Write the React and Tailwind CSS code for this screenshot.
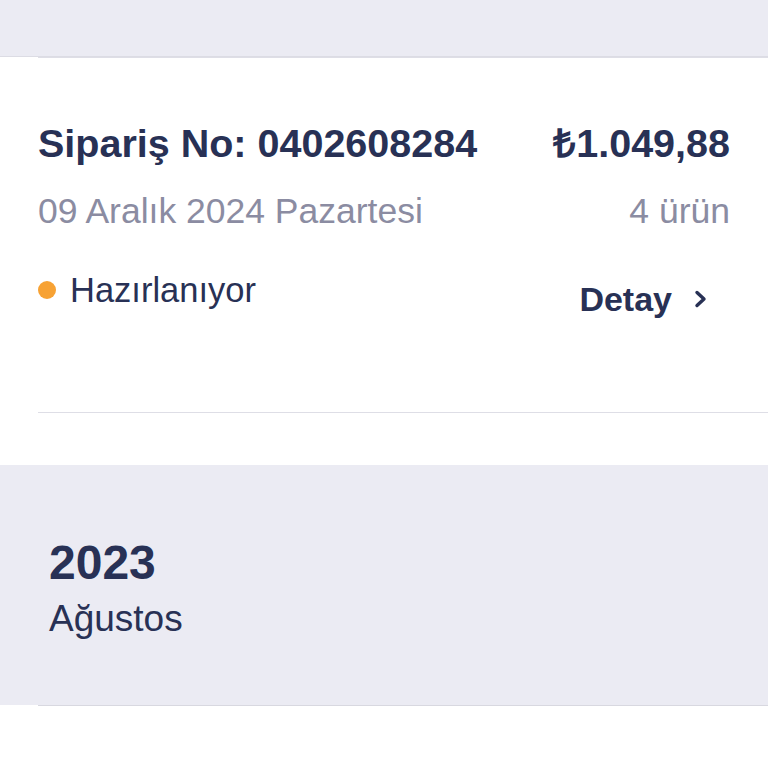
import React from "react";

const navy = "text-[#283155]";

const OrderCard = ({ orderNo, price, date, count, status }) => (
  <div className="pl-[38px]">
    <div className="border-t border-[#dedee6] pr-[38px] pt-[61px] pb-[93px]">
      {/* başlık + tutar */}
      <div className="flex items-center justify-between leading-[48px]">
        <span className={`text-[39.5px] font-bold ${navy}`}>Sipariş No: {orderNo}</span>
        <span className={`text-[39.5px] font-bold ${navy}`}>{price}</span>
      </div>

      {/* tarih + ürün sayısı */}
      <div className="mt-[24px] flex items-center justify-between leading-[40px] text-[35.5px] text-[#8b8ca2]">
        <span>{date}</span>
        <span>{count}</span>
      </div>

      {/* durum + detay */}
      <div className="mt-[39px] flex items-start justify-between">
        <div className="flex items-center gap-[14px] leading-[40px]">
          <span className="w-[18px] h-[18px] rounded-full bg-[#f7a234]"></span>
          <span className={`text-[34.5px] ${navy}`}>{status}</span>
        </div>
        <div className="mt-[9px] mr-[22px] flex items-center gap-[22px] leading-[40px]">
          <span className={`text-[34px] font-bold ${navy}`}>Detay</span>
          <svg width="14" height="18" viewBox="0 0 14 18" fill="none">
            <path d="M3 2.5L10 9L3 15.5" stroke="#283155" strokeWidth="3.4" strokeLinecap="round" strokeLinejoin="round" />
          </svg>
        </div>
      </div>
    </div>
  </div>
);

export default function App() {
  return (
    <div
      className="min-h-screen bg-white"
      style={{ fontFamily: '"Liberation Sans", Arial, sans-serif' }}
    >
      <div className="h-[57px] bg-[#ebebf3] border-b border-[#dcdce4]"></div>

      <OrderCard
        orderNo="0402608284"
        price="₺1.049,88"
        date="09 Aralık 2024 Pazartesi"
        count="4 ürün"
        status="Hazırlanıyor"
      />

      <div className="pl-[38px]">
        <div className="border-t border-[#dedee6] h-[53px]"></div>
      </div>

      {/* yıl / ay başlığı */}
      <div className="bg-[#ebebf3] h-[240px] pl-[49px] pt-[70px]">
        <div className={`text-[48px] font-bold leading-[56px] ${navy}`}>2023</div>
        <div className={`mt-[6px] text-[37px] leading-[44px] ${navy}`}>Ağustos</div>
      </div>

      <div className="pl-[38px]">
        <div className="border-t border-[#d8d8e0] h-[62px]"></div>
      </div>
    </div>
  );
}
